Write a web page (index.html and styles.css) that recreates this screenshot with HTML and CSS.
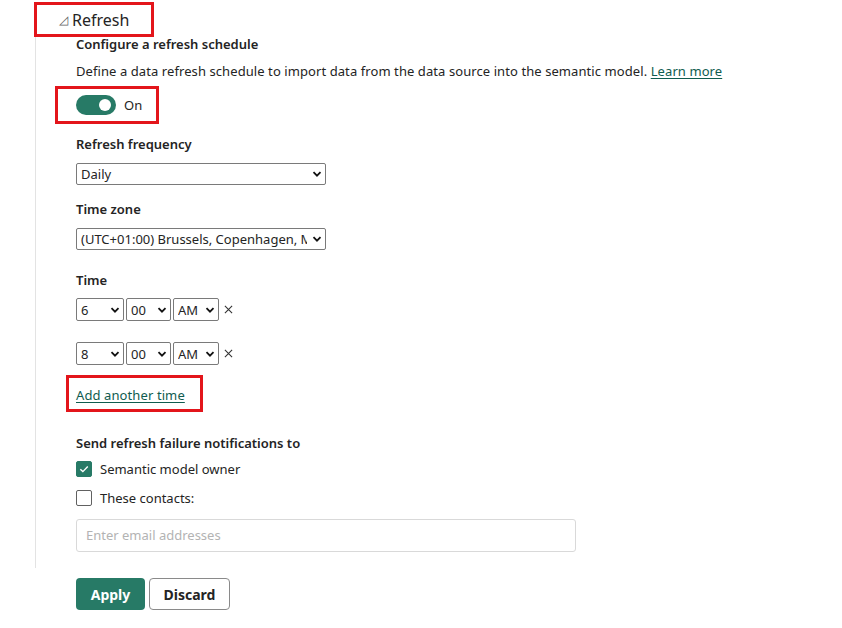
FILE: index.html
```html
<!DOCTYPE html>
<html lang="en">
<head>
<meta charset="utf-8">
<title>Refresh</title>
<link rel="stylesheet" href="styles.css">
</head>
<body>
<div class="header mark"><span class="caret">◿</span><span class="header-text">Refresh</span></div>
<div class="content">
  <div class="title">Configure a refresh schedule</div>
  <div class="desc">Define a data refresh schedule to import data from the data source into the semantic model. <a href="#" class="link">Learn more</a></div>
  <div class="toggle-wrap mark">
    <span class="toggle"><span class="knob"></span></span>
    <span class="toggle-label">On</span>
  </div>

  <div class="label lbl-freq">Refresh frequency</div>
  <div class="select sel-wide sel-gap">
    <select><option>Daily</option></select>
    <svg class="chev" viewBox="0 0 10 10"><path d="M1.5 3.2 L5 6.7 L8.5 3.2" /></svg>
  </div>

  <div class="label lbl-tz">Time zone</div>
  <div class="select sel-wide sel-gap">
    <select><option>(UTC+01:00) Brussels, Copenhagen, Madrid, Paris</option></select>
    <svg class="chev" viewBox="0 0 10 10"><path d="M1.5 3.2 L5 6.7 L8.5 3.2" /></svg>
  </div>

  <div class="label lbl-time">Time</div>
  <div class="time-row row1">
    <div class="select sel-h"><select><option>6</option></select><svg class="chev" viewBox="0 0 10 10"><path d="M1.5 3.2 L5 6.7 L8.5 3.2" /></svg></div>
    <div class="select sel-m"><select><option>00</option></select><svg class="chev" viewBox="0 0 10 10"><path d="M1.5 3.2 L5 6.7 L8.5 3.2" /></svg></div>
    <div class="select sel-ap"><select><option>AM</option></select><svg class="chev" viewBox="0 0 10 10"><path d="M1.5 3.2 L5 6.7 L8.5 3.2" /></svg></div>
    <svg class="x" viewBox="0 0 10 10"><path d="M1 1 L9 9 M9 1 L1 9" /></svg>
  </div>
  <div class="time-row row2">
    <div class="select sel-h"><select><option>8</option></select><svg class="chev" viewBox="0 0 10 10"><path d="M1.5 3.2 L5 6.7 L8.5 3.2" /></svg></div>
    <div class="select sel-m"><select><option>00</option></select><svg class="chev" viewBox="0 0 10 10"><path d="M1.5 3.2 L5 6.7 L8.5 3.2" /></svg></div>
    <div class="select sel-ap"><select><option>AM</option></select><svg class="chev" viewBox="0 0 10 10"><path d="M1.5 3.2 L5 6.7 L8.5 3.2" /></svg></div>
    <svg class="x" viewBox="0 0 10 10"><path d="M1 1 L9 9 M9 1 L1 9" /></svg>
  </div>

  <div class="add-wrap mark"><a href="#" class="link">Add another time</a></div>

  <div class="label lbl-send">Send refresh failure notifications to</div>
  <label class="check-row cr1"><span class="cb checked"><svg viewBox="0 0 16 16"><path d="M3.8 8.2 L6.7 11 L12.3 5.2" /></svg></span><span>Semantic model owner</span></label>
  <label class="check-row cr2"><span class="cb"></span><span>These contacts:</span></label>
  <div class="email">Enter email addresses</div>
</div>
<div class="buttons">
  <button class="btn primary">Apply</button>
  <button class="btn secondary">Discard</button>
</div>
</body>
</html>
```

FILE: styles.css
```css
html, body {
  margin: 0;
  padding: 0;
  background: #ffffff;
}
body {
  font-family: "Segoe UI", "Noto Sans", "Open Sans", sans-serif;
  font-size: 13px;
  color: #242424;
  width: 842px;
  height: 628px;
  overflow: hidden;
}
.mark {
  border: 3px solid #e3151b;
  box-sizing: border-box;
}
.header {
  margin: 2px 0 0 34px;
  width: 120px;
  height: 35px;
  display: flex;
  align-items: center;
  padding-left: 22px;
}
.caret {
  font-size: 12px;
  line-height: 12px;
  color: #616161;
  margin-right: 4px;
  margin-top: 1px;
}
.header-text {
  font-size: 16px;
  color: #242424;
}
.content {
  margin-left: 35px;
  border-left: 1px solid #e3e3e3;
  padding-left: 40px;
  height: 531px;
  box-sizing: border-box;
}
.title {
  font-weight: 600;
  line-height: 14px;
  height: 14px;
}
.desc {
  margin-top: 11px;
  line-height: 18px;
  letter-spacing: 0.08px;
}
.link {
  color: #0f5c4f;
  text-decoration: underline;
  text-underline-offset: 2px;
}
.toggle-wrap {
  display: inline-flex;
  align-items: center;
  margin: 6px 0 0 -21px;
  height: 38px;
  padding: 0 14px 0 18px;
}
.toggle {
  width: 40px;
  height: 20px;
  border-radius: 10px;
  background: #277a66;
  display: flex;
  align-items: center;
  justify-content: flex-end;
  padding-right: 5px;
  box-sizing: border-box;
}
.knob {
  width: 12px;
  height: 12px;
  border-radius: 50%;
  background: #ffffff;
}
.toggle-label {
  margin-left: 8px;
  line-height: 18px;
}
.label {
  font-weight: 600;
  line-height: 18px;
}
.lbl-freq { margin-top: 11px; }
.lbl-tz { margin-top: 15px; }
.lbl-time { margin-top: 21px; }
.lbl-send { margin-top: 22px; }
.select {
  position: relative;
  height: 22px;
  border: 1px solid #7a7a7a;
  border-radius: 2px;
  box-sizing: border-box;
  background: #fff;
}
.select select {
  appearance: none;
  -webkit-appearance: none;
  border: none;
  outline: none;
  background: transparent;
  width: 100%;
  height: 100%;
  font: inherit;
  font-size: 13px;
  color: #242424;
  padding: 0 18px 0 4px;
  margin: 0;
  overflow: hidden;
  text-overflow: clip;
  white-space: nowrap;
}
.chev {
  position: absolute;
  right: 3px;
  top: 50%;
  width: 10px;
  height: 10px;
  margin-top: -5px;
  background: #fff;
  pointer-events: none;
}
.chev path {
  fill: none;
  stroke: #111;
  stroke-width: 1.8;
}
.sel-wide { width: 250px; }
.sel-gap { margin-top: 10px; }
.time-row {
  display: flex;
  align-items: center;
  gap: 2px;
}
.time-row .select { height: 23px; }
.row1 { margin-top: 9px; }
.row2 { margin-top: 21px; }
.sel-h { width: 48px; }
.sel-m { width: 45px; }
.sel-ap { width: 46px; }
.x {
  width: 9px;
  height: 9px;
  margin-left: 3px;
}
.x path {
  stroke: #333;
  stroke-width: 1.2;
  fill: none;
}
.add-wrap {
  display: inline-flex;
  align-items: center;
  margin: 10px 0 0 -10px;
  height: 37px;
  padding: 3px 15px 0 7px;
}
.add-wrap .link {
  letter-spacing: 0.1px;
}
.check-row {
  display: flex;
  align-items: center;
  height: 18px;
  line-height: 18px;
}
.cr1 { margin-top: 8px; }
.cr2 { margin-top: 11px; }
.cb {
  width: 16px;
  height: 16px;
  border: 1px solid #616161;
  border-radius: 2px;
  box-sizing: border-box;
  margin-right: 8px;
  display: flex;
}
.cb.checked {
  background: #277a66;
  border-color: #277a66;
}
.cb svg {
  width: 14px;
  height: 14px;
}
.cb path {
  fill: none;
  stroke: #fff;
  stroke-width: 1.6;
}
.email {
  margin-top: 12px;
  width: 500px;
  height: 33px;
  border: 1px solid #d9d9d9;
  border-radius: 3px;
  box-sizing: border-box;
  padding-left: 9px;
  line-height: 31px;
  color: #b3b3b3;
}
.buttons {
  display: flex;
  gap: 4px;
  margin: 10px 0 0 76px;
}
.btn {
  height: 32px;
  border-radius: 4px;
  font-family: inherit;
  font-size: 14px;
  font-weight: 700;
  box-sizing: border-box;
  padding: 0;
}
.primary {
  width: 69px;
  background: #277a66;
  color: #fff;
  border: none;
}
.secondary {
  width: 81px;
  background: #fff;
  color: #242424;
  border: 1px solid #8a8a8a;
}
```
